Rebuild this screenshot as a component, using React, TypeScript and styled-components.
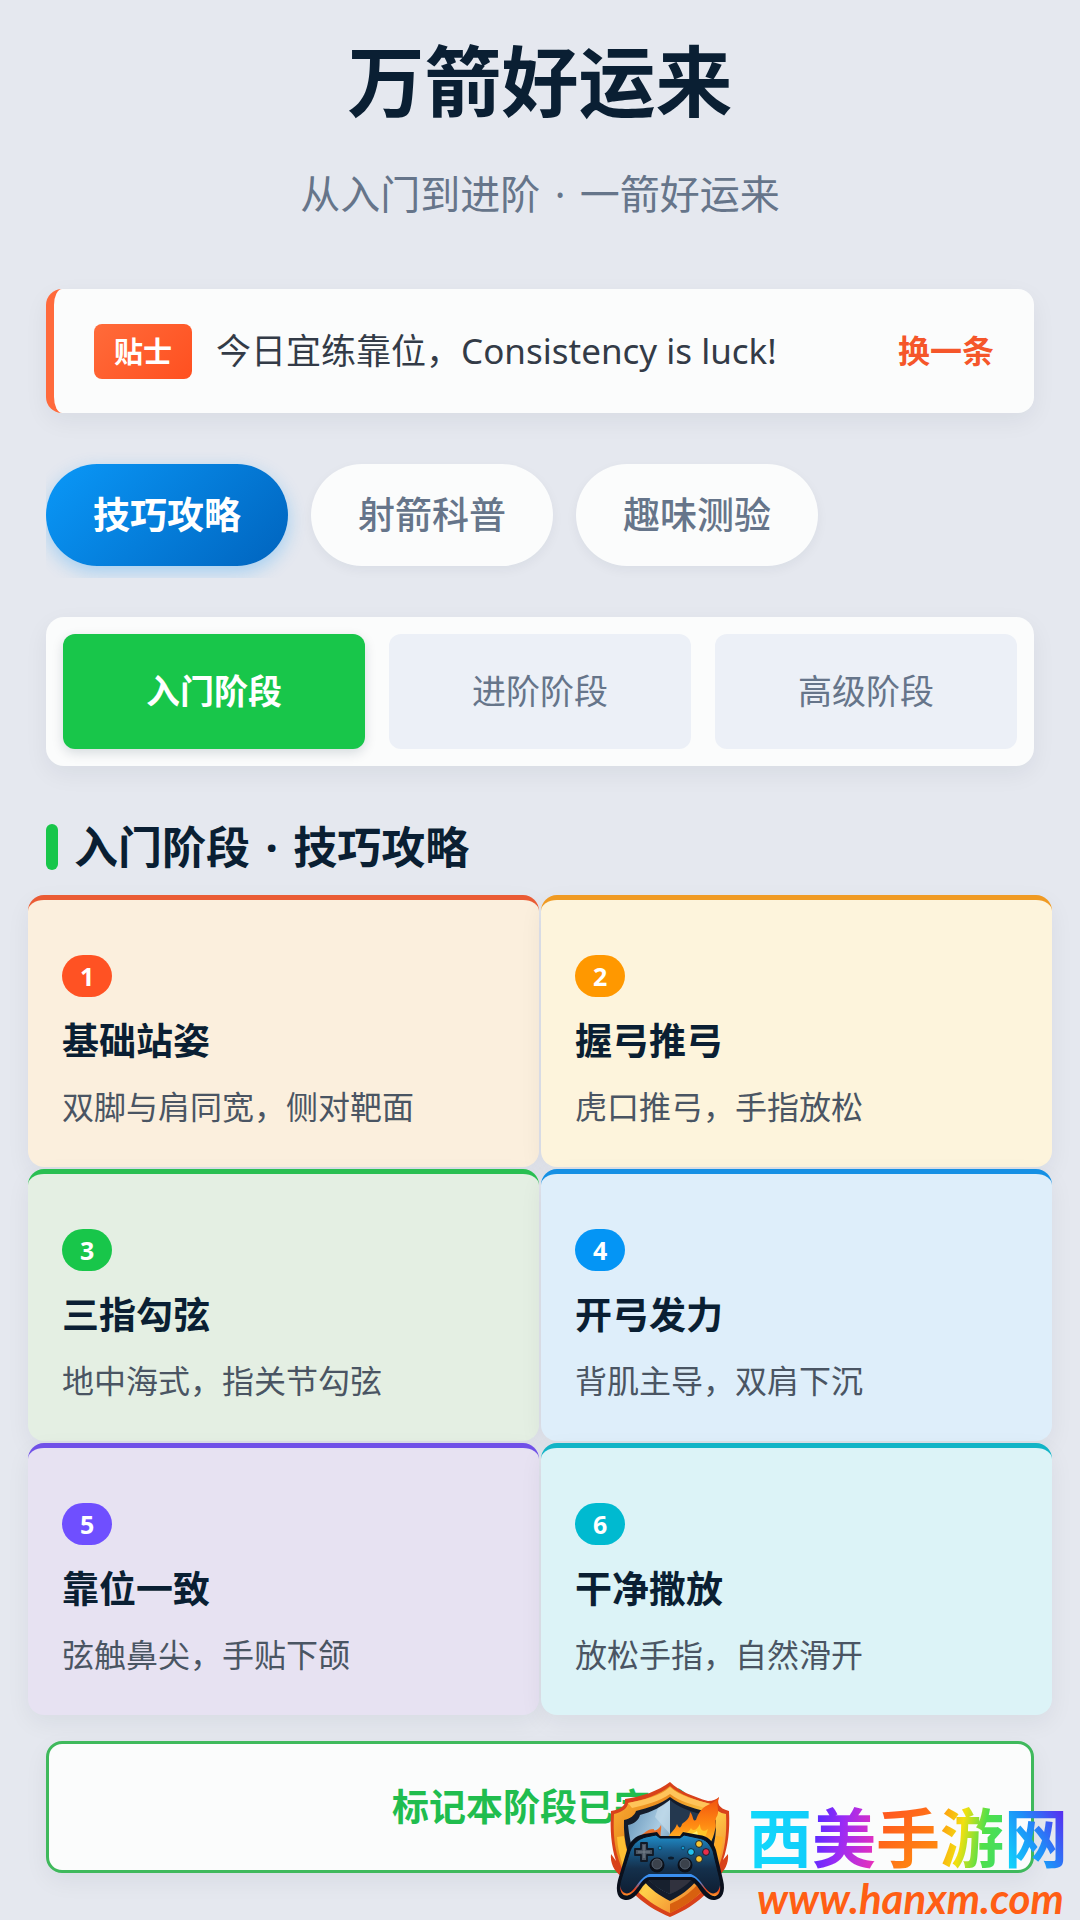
import React, { useState } from "react"
import styled, { createGlobalStyle } from "styled-components"

const Colors = {
  page: "#e5e8ef",
  surface: "#fbfcfc",
  ink: "#0a1f33",
  text: "#333b47",
  muted: "#66758a",
  body: "#4a5563",
  green: "#18c64a",
  orange: "#f5562a",
}

const tips = [
  "今日宜练靠位，Consistency is luck!",
  "呼吸放缓，Aim small, miss small!",
]

const tabs = ["技巧攻略", "射箭科普", "趣味测验"]
const stages = ["入门阶段", "进阶阶段", "高级阶段"]

const skills = [
  { title: "基础站姿", desc: "双脚与肩同宽，侧对靶面", line: "#ea5b34", dot: "#ff5223", bg: "#fbefdd" },
  { title: "握弓推弓", desc: "虎口推弓，手指放松", line: "#f09a22", dot: "#ff9800", bg: "#fdf4dc" },
  { title: "三指勾弦", desc: "地中海式，指关节勾弦", line: "#29bf52", dot: "#18c64a", bg: "#e4efe3" },
  { title: "开弓发力", desc: "背肌主导，双肩下沉", line: "#1590e4", dot: "#0495f5", bg: "#deeefa" },
  { title: "靠位一致", desc: "弦触鼻尖，手贴下颌", line: "#7051e8", dot: "#6f4fff", bg: "#e7e2f2" },
  { title: "干净撒放", desc: "放松手指，自然滑开", line: "#12b4c6", dot: "#00bad0", bg: "#dcf3f7" },
]

const siteName = [
  { char: "西", fill: "linear-gradient(90deg, #12d8fb, #10cdfb)" },
  { char: "美", fill: "linear-gradient(100deg, #5a2bff 10%, #9a2bf5 45%, #f032b4)" },
  { char: "手", fill: "linear-gradient(135deg, #ff5a1e 20%, #ff8a10 80%)" },
  { char: "游", fill: "linear-gradient(100deg, #ff9a10 5%, #f2e010 35%, #4fe04a 65%, #3fdc6a)" },
  { char: "网", fill: "linear-gradient(60deg, #10d4fb 10%, #1f8cf8 50%, #5a2bf0 90%)" },
]

const ShieldLogo: React.FC = () => (
  <S.Logo viewBox="0 0 120 136" aria-hidden="true">
    <defs>
      <linearGradient id="rim" x1="0" y1="0" x2="1" y2="1">
        <stop offset="0" stopColor="#ffb43a" />
        <stop offset="0.3" stopColor="#e88a1c" />
        <stop offset="0.55" stopColor="#ffd04a" />
        <stop offset="1" stopColor="#e8541a" />
      </linearGradient>
      <linearGradient id="steel" x1="0" y1="0" x2="1" y2="1">
        <stop offset="0" stopColor="#5f8fb5" />
        <stop offset="0.5" stopColor="#a9cbe2" />
        <stop offset="1" stopColor="#4f7896" />
      </linearGradient>
      <linearGradient id="flame" x1="0" y1="0" x2="0" y2="1">
        <stop offset="0" stopColor="#f0500f" />
        <stop offset="0.5" stopColor="#ff8a12" />
        <stop offset="1" stopColor="#ffd83a" />
      </linearGradient>
      <linearGradient id="pad" x1="0" y1="0" x2="0" y2="1">
        <stop offset="0" stopColor="#1f8fcb" />
        <stop offset="0.25" stopColor="#1a5a88" />
        <stop offset="0.55" stopColor="#14304c" />
        <stop offset="1" stopColor="#0e1c30" />
      </linearGradient>
      <linearGradient id="grip" x1="0" y1="0" x2="0" y2="1">
        <stop offset="0.3" stopColor="#3a8ff0" />
        <stop offset="0.7" stopColor="#e8401a" />
        <stop offset="1" stopColor="#ff9a2a" />
      </linearGradient>
    </defs>
    <path d="M60 0C69 9 84 15 98 19C103 19 107 17 109 15C107 21 108 26 119 29C120 48 118 64 113 78L118 72C119 82 114 89 109 94C101 111 82 126 60 135C38 126 19 111 11 94C4 89 0 81 1 72L6 79C1 64 0 47 1 29C12 27 16 23 15 17C31 15 48 9 60 0Z" fill="#d8411a" />
    <path d="M60 4C70 13 86 18 103 23C105 28 110 31 116 32C117 52 115 68 109 84C101 105 82 121 60 131C38 121 19 105 11 84C4 67 3 50 4 32C12 30 18 26 18 21C34 18 49 13 60 4Z" fill="url(#rim)" />
    <path d="M60 5C70 14 86 18 101 22L96 26C82 23 69 19 60 12C50 19 36 23 22 26L18 21C34 18 50 14 60 5Z" fill="#ffc45a" />
    <path d="M7 55C8 76 16 96 32 110L25 85C20 80 16 70 14 54Z" fill="#ffbf33" />
    <path d="M113 55C112 76 104 96 88 110L94 86C101 78 105 68 106 54Z" fill="#ffab25" />
    <path d="M60 131C73 125 84 118 93 108L87 103C80 111 70 118 60 122Z" fill="#d8600f" />
    <path d="M60 15C69 22 82 26 94 29C96 34 101 37 106 38C107 60 100 82 88 97C80 107 70 114 60 119C50 114 40 107 32 97C19 82 13 60 14 38C20 37 25 33 26 29C38 26 51 22 60 15Z" fill="#141c2b" />
    <path d="M60 18V112C40 104 22 84 18 43C24 42 29 38 30 33C41 30 52 25 60 18Z" fill="url(#steel)" />
    <path d="M60 18V52L45 35L48 26Z" fill="#c9dfec" opacity="0.6" />
    <path d="M60 18C68 25 79 29 90 32C92 37 96 41 102 42C98 82 80 104 60 112Z" fill="#24384f" />
    <path d="M60 112V92H40L38 97C44 104 52 109 60 112Z" fill="#17202e" />
    <path d="M60 112V92H80L82 97C76 104 68 109 60 112Z" fill="#31323e" />
    <path d="M29 54C35 52 36 47 44 47C43 50 49 48 51 43C52 49 49 52 52 57L29 61Z" fill="#e8702a" />
    <path d="M58 56C60 50 64 50 67 42C69 47 71 46 72 42C76 39 80 36 80 30C84 34 82 40 86 38C88 32 91 26 98 23C102 21 106 19 109 15C105 25 111 29 106 36C105 41 107 44 105 48C103 58 98 67 94 71L58 62Z" fill="url(#flame)" />
    <path d="M63 58C68 54 71 54 74 49C76 52 79 50 81 46C83 50 87 48 90 42C90 48 93 51 98 47C95 57 91 64 88 66L65 59Z" fill="#ffc629" />
    <path d="M77 52C80 53 84 51 87 49L89 56L76 57Z" fill="#fff06a" />
    <path d="M34 52L47 50L50 54H70L73 50L89 53C98 54 103 59 106 68L113 98C116 110 112 117 105 118C98 119 93 113 87 104L81 98H39L33 104C27 113 22 119 15 118C8 117 5 110 8 98L17 68C20 59 25 54 34 52Z" fill="#0a101c" />
    <path d="M36 55L46 53L50 56H70L74 53L88 56C96 57 100 62 103 69L110 98C112 108 109 114 104 114C99 114 94 108 89 101C86 97 83 95 80 95H40C37 95 34 97 31 101C26 108 21 114 16 114C11 114 8 108 11 98L20 69C23 62 28 57 36 55Z" fill="url(#pad)" stroke="#0a101c" strokeWidth="1" />
    <path d="M10 103C11 111 17 114 22 109C27 104 31 95 39 92H81C89 95 93 104 98 109C103 114 109 111 110 103C111 110 108 115 103 114C97 112 92 103 87 98C84 95 82 95 80 95H40C33 95 31 102 27 106C20 116 10 117 10 103Z" fill="url(#grip)" />
    <path d="M31 61H37V67H43V73H37V79H31V73H25V67H31Z" fill="#4a5563" stroke="#111925" strokeWidth="1.8" strokeLinejoin="round" />
    <path d="M34 63V76M28 70H40" stroke="#76818c" strokeWidth="1" />
    <circle cx="47" cy="83" r="7.5" fill="#0b1019" />
    <circle cx="47" cy="82" r="5" fill="#3b424c" stroke="#566170" />
    <circle cx="75" cy="83" r="7.5" fill="#0b1019" />
    <circle cx="75" cy="82" r="5" fill="#3b424c" stroke="#566170" />
    <circle cx="50" cy="66" r="1.8" fill="#1599d0" stroke="#0b3550" strokeWidth="0.7" />
    <circle cx="73" cy="66" r="1.8" fill="#1599d0" stroke="#0b3550" strokeWidth="0.7" />
    <ellipse cx="61" cy="76" rx="3" ry="1.5" fill="#0c1c2c" />
    <circle cx="89" cy="62" r="3.4" fill="#f8c530" stroke="#14202e" />
    <circle cx="81" cy="70" r="3.4" fill="#23c3ee" stroke="#14202e" />
    <circle cx="96" cy="70" r="3.4" fill="#ea2d4a" stroke="#14202e" />
    <circle cx="89" cy="77" r="3.4" fill="#f8c530" stroke="#14202e" />
  </S.Logo>
)

const App: React.FC = () => {
  const [tip, setTip] = useState(0)
  const [tab, setTab] = useState(tabs[0])
  const [stage, setStage] = useState(stages[0])

  return <S.Page>
    <GlobalStyle />

    <S.Header>
      <S.Title>万箭好运来</S.Title>
      <S.Subtitle>从入门到进阶 <S.Dot>·</S.Dot> 一箭好运来</S.Subtitle>
    </S.Header>

    <S.TipCard>
      <S.TipBadge>贴士</S.TipBadge>
      <S.TipText>{tips[tip]}</S.TipText>
      <S.TipButton onClick={() => setTip((tip + 1) % tips.length)}>换一条</S.TipButton>
    </S.TipCard>

    <S.Tabs>
      {tabs.map(name => (
        <S.Tab key={name} $active={name === tab} onClick={() => setTab(name)}>{name}</S.Tab>
      ))}
    </S.Tabs>

    <S.Stages>
      {stages.map(name => (
        <S.Stage key={name} $active={name === stage} onClick={() => setStage(name)}>{name}</S.Stage>
      ))}
    </S.Stages>

    <S.SectionTitle>
      <span>{stage} <S.Dot>·</S.Dot> {tab}</span>
    </S.SectionTitle>

    <S.Grid>
      {skills.map((skill, index) => (
        <S.Card key={skill.title} $line={skill.line} $bg={skill.bg}>
          <S.Number $bg={skill.dot}>{index + 1}</S.Number>
          <S.CardTitle>{skill.title}</S.CardTitle>
          <S.CardText>{skill.desc}</S.CardText>
        </S.Card>
      ))}
    </S.Grid>

    <S.DoneButton>标记本阶段已完成</S.DoneButton>

    <S.Watermark>
      <ShieldLogo />
      <div>
        <S.SiteName>
          {siteName.map(({ char, fill }) => <S.SiteChar key={char} $fill={fill}>{char}</S.SiteChar>)}
        </S.SiteName>
        <S.SiteUrl>www.hanxm.com</S.SiteUrl>
      </div>
    </S.Watermark>
  </S.Page>
}

export default App

const GlobalStyle = createGlobalStyle`
  * {
    box-sizing: border-box;
  }
  body {
    margin: 0;
    background: ${Colors.page};
    color: ${Colors.ink};
    font-family: "Noto Sans", "Noto Sans CJK SC", sans-serif;
  }
  h1, h2, h3, p {
    margin: 0;
  }
  button {
    border: 0;
    padding: 0;
    font-family: inherit;
    cursor: pointer;
  }
`

const S = {
  Page: styled.main`
    position: relative;
    display: flex;
    flex-direction: column;
    min-height: 100vh;
    padding: 32px 46px 47px;
  `,
  Header: styled.header`
    text-align: center;
    margin-bottom: 65px;
  `,
  Title: styled.h1`
    font-size: 77px;
    line-height: 100px;
    font-weight: 700;
  `,
  Subtitle: styled.p`
    margin-top: 32px;
    font-size: 40px;
    line-height: 60px;
    color: ${Colors.muted};
  `,
  Dot: styled.span`
    margin: 0 4px;
  `,
  TipCard: styled.section`
    display: flex;
    align-items: center;
    gap: 24px;
    min-height: 124px;
    padding: 32px 40px;
    border-left: 8px solid #ff6a3c;
    border-radius: 16px;
    background: ${Colors.surface};
    box-shadow: 0 8px 24px rgba(10, 31, 51, 0.06);
  `,
  TipBadge: styled.span`
    padding: 0 20px;
    border-radius: 8px;
    background: linear-gradient(135deg, #ff6b3a, #ff5020);
    color: #fff;
    font-size: 29px;
    line-height: 55px;
    font-weight: 700;
  `,
  TipText: styled.p`
    flex: 1;
    font-size: 35px;
    line-height: 48px;
    color: ${Colors.text};
  `,
  TipButton: styled.button`
    background: none;
    color: ${Colors.orange};
    font-size: 32px;
    line-height: 48px;
    font-weight: 700;
  `,
  Tabs: styled.nav`
    display: flex;
    gap: 23px;
    margin-top: 39px;
    padding: 12px 0;
    overflow-x: auto;
    scrollbar-width: none;
  `,
  Tab: styled.button<{ $active: boolean }>`
    flex: none;
    padding: 0 47px;
    border-radius: 51px;
    background: ${({ $active }) => $active ? "linear-gradient(135deg, #0a98f8, #0064be)" : Colors.surface};
    color: ${({ $active }) => $active ? "#fff" : Colors.muted};
    font-size: 37px;
    line-height: 102px;
    font-weight: ${({ $active }) => $active ? 700 : 500};
    box-shadow: ${({ $active }) => $active ? "0 6px 18px rgba(10, 150, 248, 0.3)" : "0 4px 12px rgba(10, 31, 51, 0.05)"};
  `,
  Stages: styled.div`
    display: flex;
    gap: 24px;
    margin-top: 39px;
    padding: 17px;
    border-radius: 18px;
    background: ${Colors.surface};
    box-shadow: 0 8px 24px rgba(10, 31, 51, 0.06);
  `,
  Stage: styled.button<{ $active: boolean }>`
    flex: 1;
    border-radius: 12px;
    background: ${({ $active }) => $active ? Colors.green : "#ecf0f7"};
    color: ${({ $active }) => $active ? "#fff" : Colors.muted};
    font-size: 34px;
    line-height: 115px;
    font-weight: ${({ $active }) => $active ? 700 : 400};
    box-shadow: ${({ $active }) => $active ? "0 4px 12px rgba(10, 31, 51, 0.15)" : "none"};
  `,
  SectionTitle: styled.h2`
    display: flex;
    align-items: center;
    gap: 16px;
    margin: 49px 0 16px;
    font-size: 44px;
    line-height: 64px;
    font-weight: 700;

    &::before {
      content: "";
      width: 12px;
      height: 46px;
      border-radius: 6px;
      background: ${Colors.green};
    }
  `,
  Grid: styled.section`
    display: grid;
    grid-template-columns: 1fr 1fr;
    gap: 2px;
    margin: 0 -18px;
  `,
  Card: styled.article<{ $line: string; $bg: string }>`
    display: flex;
    flex-direction: column;
    align-items: flex-start;
    padding: 55px 34px 36px;
    border-top: 5px solid ${({ $line }) => $line};
    border-radius: 16px;
    background: ${({ $bg }) => $bg};
    box-shadow: 0 8px 24px rgba(10, 31, 51, 0.06);
  `,
  Number: styled.span<{ $bg: string }>`
    padding: 0 18px;
    border-radius: 21px;
    background: ${({ $bg }) => $bg};
    color: #fff;
    font-size: 25px;
    line-height: 42px;
    font-weight: 700;
  `,
  CardTitle: styled.h3`
    margin-top: 16px;
    font-size: 37px;
    line-height: 56px;
    font-weight: 700;
  `,
  CardText: styled.p`
    margin-top: 14px;
    font-size: 32px;
    line-height: 48px;
    color: ${Colors.body};
  `,
  DoneButton: styled.button`
    margin-top: 26px;
    min-height: 132px;
    border: 3px solid #3fb95c;
    border-radius: 16px;
    background: ${Colors.surface};
    color: #20bd4e;
    font-size: 37px;
    line-height: 56px;
    font-weight: 700;
    box-shadow: 0 8px 24px rgba(10, 31, 51, 0.06);
  `,
  Watermark: styled.aside`
    position: absolute;
    right: 12px;
    bottom: 0;
    display: flex;
    align-items: flex-end;
    gap: 18px;
  `,
  Logo: styled.svg`
    width: 120px;
    height: 136px;
    margin-bottom: 2px;
  `,
  SiteName: styled.div`
    display: flex;
    font-size: 64px;
    line-height: 76px;
    font-weight: 700;
  `,
  SiteChar: styled.span<{ $fill: string }>`
    background: ${({ $fill }) => $fill};
    background-clip: text;
    -webkit-background-clip: text;
    color: transparent;
  `,
  SiteUrl: styled.div`
    padding-left: 9px;
    color: #ff5e14;
    font-family: Lato, sans-serif;
    font-size: 42px;
    line-height: 44px;
    font-style: italic;
    font-weight: 700;
  `,
}
